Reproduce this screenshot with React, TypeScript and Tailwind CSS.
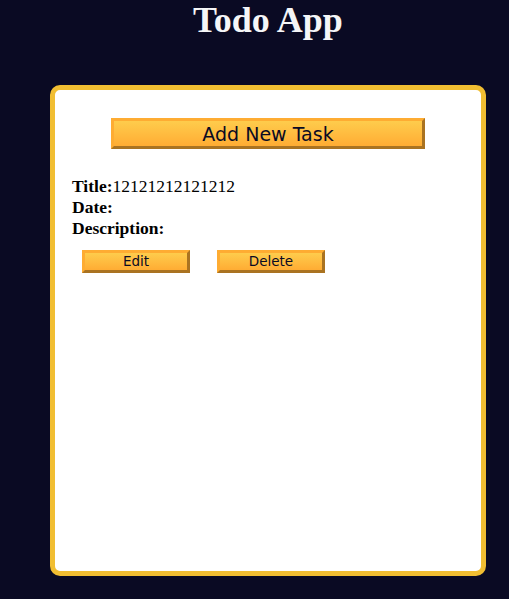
import React from "react";

const btn =
  "bg-gradient-to-b from-[#fecc4c] to-[#ffac33] border-[3px] [border-style:outset] border-[#feac32] text-[#0a0a23] font-['DejaVu_Sans',sans-serif] leading-none";

const App = () => {
  return (
    <div className="min-h-[599px] bg-[#0a0a23] font-['Liberation_Serif',serif]">
      <div className="w-[436px] ml-[50px]">
        <h1 className="text-center text-[#f5f6f7] font-bold text-[36px] leading-[41px]">Todo App</h1>
        <div className="mt-[44px] h-[491px] bg-white border-[5px] border-[#f1be32] rounded-[10px] px-[17px] pt-[28px]">
          <div className="flex justify-center">
            <button className={`${btn} w-[314px] h-[31px] text-[19px] pt-[1px]`}>Add New Task</button>
          </div>
          <div className="mt-[27px] text-black text-[17.5px] leading-[21px]">
            <p>
              <strong>Title:</strong>12121212121212
            </p>
            <p>
              <strong>Date:</strong>
            </p>
            <p>
              <strong>Description:</strong>
            </p>
          </div>
          <div className="mt-[11px] ml-[10px] flex gap-[27px]">
            <button className={`${btn} w-[108px] h-[23px] text-[13.5px]`}>Edit</button>
            <button className={`${btn} w-[108px] h-[23px] text-[13.5px]`}>Delete</button>
          </div>
        </div>
      </div>
    </div>
  );
};

export default App;
